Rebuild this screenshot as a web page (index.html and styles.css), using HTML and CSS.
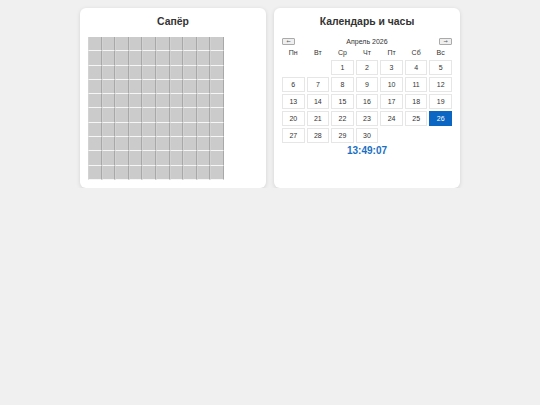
FILE: index.html
```html
<!DOCTYPE html>
<html lang="ru">
<head>
<meta charset="utf-8">
<title>Сапёр и календарь</title>
<link rel="stylesheet" href="styles.css">
</head>
<body>
<div class="wrap">
  <section class="card">
    <h2 class="title">Сапёр</h2>
    <div class="mines" id="mines"></div>
  </section>
  <section class="card">
    <h2 class="title">Календарь и часы</h2>
    <div class="nav">
      <button class="navbtn">←</button>
      <span class="month">Апрель 2026</span>
      <button class="navbtn">→</button>
    </div>
    <div class="cal">
      <div class="wd">Пн</div><div class="wd">Вт</div><div class="wd">Ср</div><div class="wd">Чт</div><div class="wd">Пт</div><div class="wd">Сб</div><div class="wd">Вс</div>
      <div class="empty"></div><div class="empty"></div>
      <div class="day">1</div><div class="day">2</div><div class="day">3</div><div class="day">4</div><div class="day">5</div>
      <div class="day">6</div><div class="day">7</div><div class="day">8</div><div class="day">9</div><div class="day">10</div><div class="day">11</div><div class="day">12</div>
      <div class="day">13</div><div class="day">14</div><div class="day">15</div><div class="day">16</div><div class="day">17</div><div class="day">18</div><div class="day">19</div>
      <div class="day">20</div><div class="day">21</div><div class="day">22</div><div class="day">23</div><div class="day">24</div><div class="day">25</div><div class="day today">26</div>
      <div class="day">27</div><div class="day">28</div><div class="day">29</div><div class="day">30</div>
    </div>
    <div class="clock">13:49:07</div>
  </section>
</div>
<script>
  var m = document.getElementById('mines');
  for (var i = 0; i < 100; i++) {
    var c = document.createElement('div');
    c.className = 'cell';
    m.appendChild(c);
  }
</script>
</body>
</html>
```

FILE: styles.css
```css
html, body {
  margin: 0;
  padding: 0;
  background: #f0f0f0;
  font-family: "Liberation Sans", Arial, sans-serif;
  color: #333;
}
.wrap {
  width: 380px;
  margin: 8px auto 0;
  display: grid;
  grid-template-columns: 186px 186px;
  gap: 8px;
}
.card {
  background: #fff;
  border-radius: 6px;
  box-shadow: 0 1px 4px rgba(0, 0, 0, 0.12);
  padding: 8px;
}
.title {
  margin: 0 0 9px;
  font-size: 10.4px;
  line-height: 12px;
  font-weight: bold;
  text-align: center;
  color: #333;
}
.mines {
  width: 136px;
  display: grid;
  grid-template-columns: repeat(10, 1fr);
  grid-template-rows: repeat(10, 14.3px);
}
.cell {
  background: #cbcbcb;
  border-left: 1px solid #d2d2d2;
  border-right: 1px solid #a8a8a8;
  border-bottom: 1px solid #f6f6f6;
}
.nav {
  display: flex;
  justify-content: space-between;
  align-items: center;
  height: 9px;
  margin-bottom: 2px;
}
.navbtn {
  width: 13px;
  height: 7px;
  padding: 0;
  margin: 0;
  font-size: 5px;
  line-height: 5px;
  border: 1px solid #aaa;
  border-radius: 1px;
  background: #efefef;
  color: #555;
  font-family: "DejaVu Sans", sans-serif;
}
.month {
  font-size: 7px;
  color: #333;
}
.cal {
  display: grid;
  grid-template-columns: repeat(7, 1fr);
  grid-template-rows: 10px repeat(5, 15px);
  gap: 2px;
}
.wd {
  font-size: 7px;
  line-height: 10px;
  text-align: center;
  color: #333;
}
.day {
  border: 1px solid #e6e6e6;
  font-size: 7px;
  line-height: 13px;
  text-align: center;
  color: #333;
  background: #fff;
}
.day.today {
  background: #0a66c2;
  border-color: #0a66c2;
  color: #fff;
}
.clock {
  margin-top: 2px;
  font-size: 10px;
  line-height: 12px;
  font-weight: bold;
  text-align: center;
  color: #1a6fc4;
}
```
